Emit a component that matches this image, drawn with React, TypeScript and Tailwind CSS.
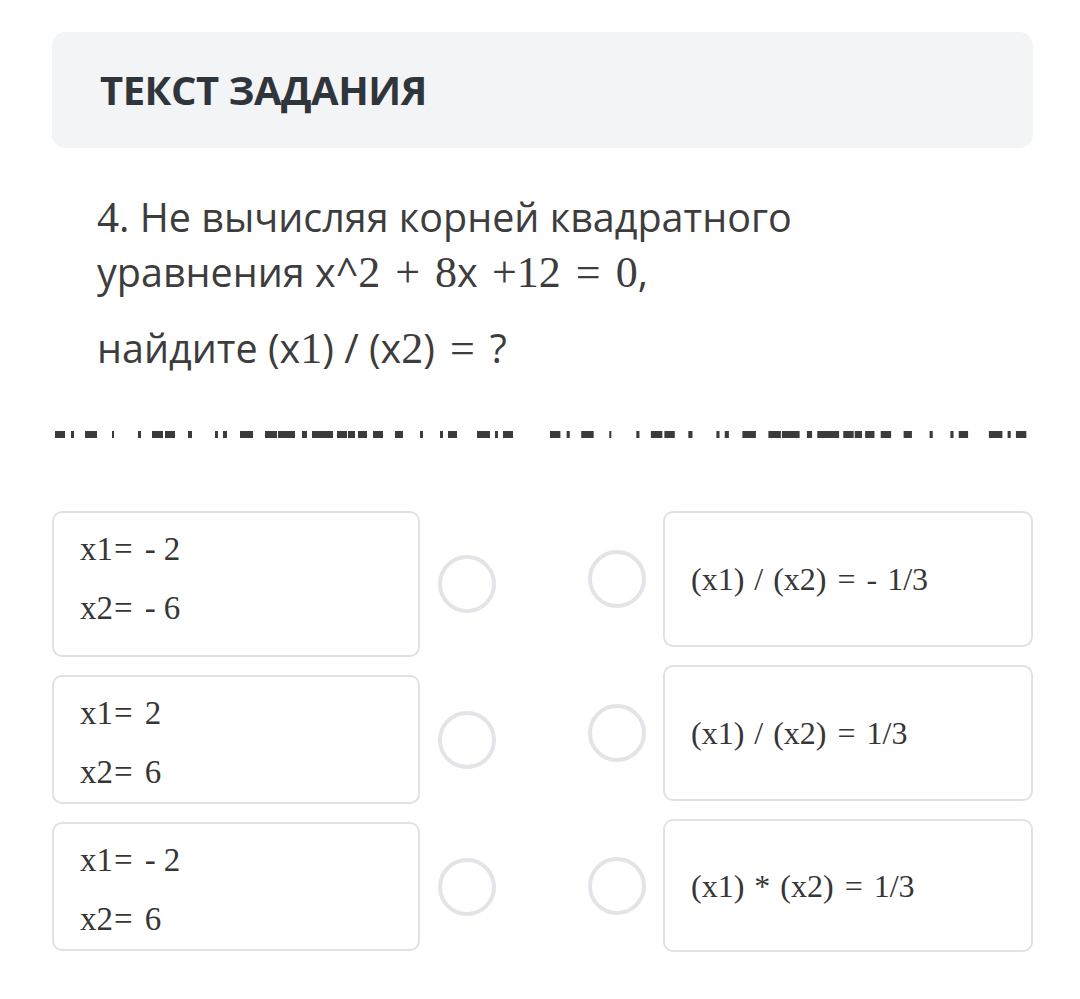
import React from 'react';

// dark blocks of the divider, x ranges in px (first half, repeated once)
const DASHES: [number, number][] = [
  [0, 10], [16, 19], [30, 42], [57, 59], [83, 86], [97, 108], [110, 120], [133, 137],
  [160, 163], [168, 172], [185, 198], [210, 222], [223, 240], [247, 252], [257, 278],
  [282, 292], [293, 300], [303, 312], [318, 328], [340, 348], [365, 368], [385, 388],
  [393, 402], [422, 435], [440, 443], [448, 458],
];

const Divider: React.FC = () => (
  <svg width="980" height="7" viewBox="0 0 980 7" className="block ml-[3px]">
    {[0, 1].map((half) =>
      DASHES.map(([a, b], i) => {
        const x = half === 0 ? a : 495 + a * 1.04;
        const w = half === 0 ? b - a : (b - a) * 1.04;
        return <rect key={`${half}-${i}`} x={x} y={0} width={w} height={7} fill="#3b3b3b" />;
      })
    )}
  </svg>
);

const Radio: React.FC = () => (
  <div className="h-[58px] w-[58px] shrink-0 rounded-full border-[4px] border-[#e2e4e7] bg-white" />
);

const LeftCard: React.FC<{ h: string; x1: string; x2: string }> = ({ h, x1, x2 }) => (
  <div className="flex items-start">
    <div className={`${h} w-[368px] rounded-[10px] border-2 border-[#dfe1e4] pl-[26px] pt-[20px] flex flex-col gap-[27px] font-['Liberation_Serif',serif] text-[33px] leading-[32px] text-[#363636]`}>
      <div>x1<span className="ml-[1px] mr-[12px]">=</span>{x1}</div>
      <div>x2<span className="ml-[1px] mr-[12px]">=</span>{x2}</div>
    </div>
    <div className="ml-[18px] self-center">
      <Radio />
    </div>
  </div>
);

const RightCard: React.FC<{ h: string; children: React.ReactNode }> = ({ h, children }) => (
  <div className="flex items-center">
    <Radio />
    <div className={`${h} ml-[17px] w-[370px] rounded-[10px] border-2 border-[#dfe1e4] pl-[26px] flex items-center font-['Liberation_Serif',serif] text-[32px] text-[#363636] [word-spacing:2px]`}>
      {children}
    </div>
  </div>
);

const Eq: React.FC = () => <span className="mx-[11px]">=</span>;

const S: React.FC<{ children: React.ReactNode }> = ({ children }) => (
  <span className="font-['Liberation_Serif',serif] text-[44px]">{children}</span>
);

const Op: React.FC<{ children: React.ReactNode }> = ({ children }) => (
  <span className="font-['Liberation_Serif',serif] text-[44px] mx-[15px]">{children}</span>
);

const App: React.FC = () => {
  return (
    <div className="w-[1080px] min-h-[999px] bg-white pt-8 font-['Open_Sans',sans-serif]">
      <div className="ml-[52px] w-[981px]">
        <div className="h-[116px] rounded-[14px] bg-[#f3f4f6] flex items-center pl-12">
          <h1 className="text-[40px] font-bold text-[#30353c] tracking-[-0.5px]">ТЕКСТ ЗАДАНИЯ</h1>
        </div>

        <div className="mt-[42px] pl-[45px] text-[39.5px] leading-[54px] text-[#3d3d3d]">
          <p>
            <S>4</S>. Не вычисляя корней квадратного
            <br />
            уравнения x^<S>2</S><Op>+</Op><S>8</S>x <span className="ml-[4px]" /><S>+12</S><Op>=</Op><S>0</S>,
          </p>
          <p className="mt-[21px]">
            найдите (x<S>1</S>) / (x<S>2</S>)<Op>=</Op>?
          </p>
        </div>

        <div className="mt-[55px]">
          <Divider />
        </div>

        <div className="mt-[73px] flex justify-between">
          <div className="flex flex-col gap-[18px]">
            <LeftCard h="h-[146px]" x1="- 2" x2="- 6" />
            <LeftCard h="h-[129px]" x1="2" x2="6" />
            <LeftCard h="h-[129px]" x1="- 2" x2="6" />
          </div>
          <div className="flex flex-col gap-[18px]">
            <RightCard h="h-[136px]">(x1) / (x2)<Eq />- 1/3</RightCard>
            <RightCard h="h-[136px]">(x1) / (x2)<Eq />1/3</RightCard>
            <RightCard h="h-[133px]">(x1) * (x2)<Eq />1/3</RightCard>
          </div>
        </div>
      </div>
    </div>
  );
};

export default App;
